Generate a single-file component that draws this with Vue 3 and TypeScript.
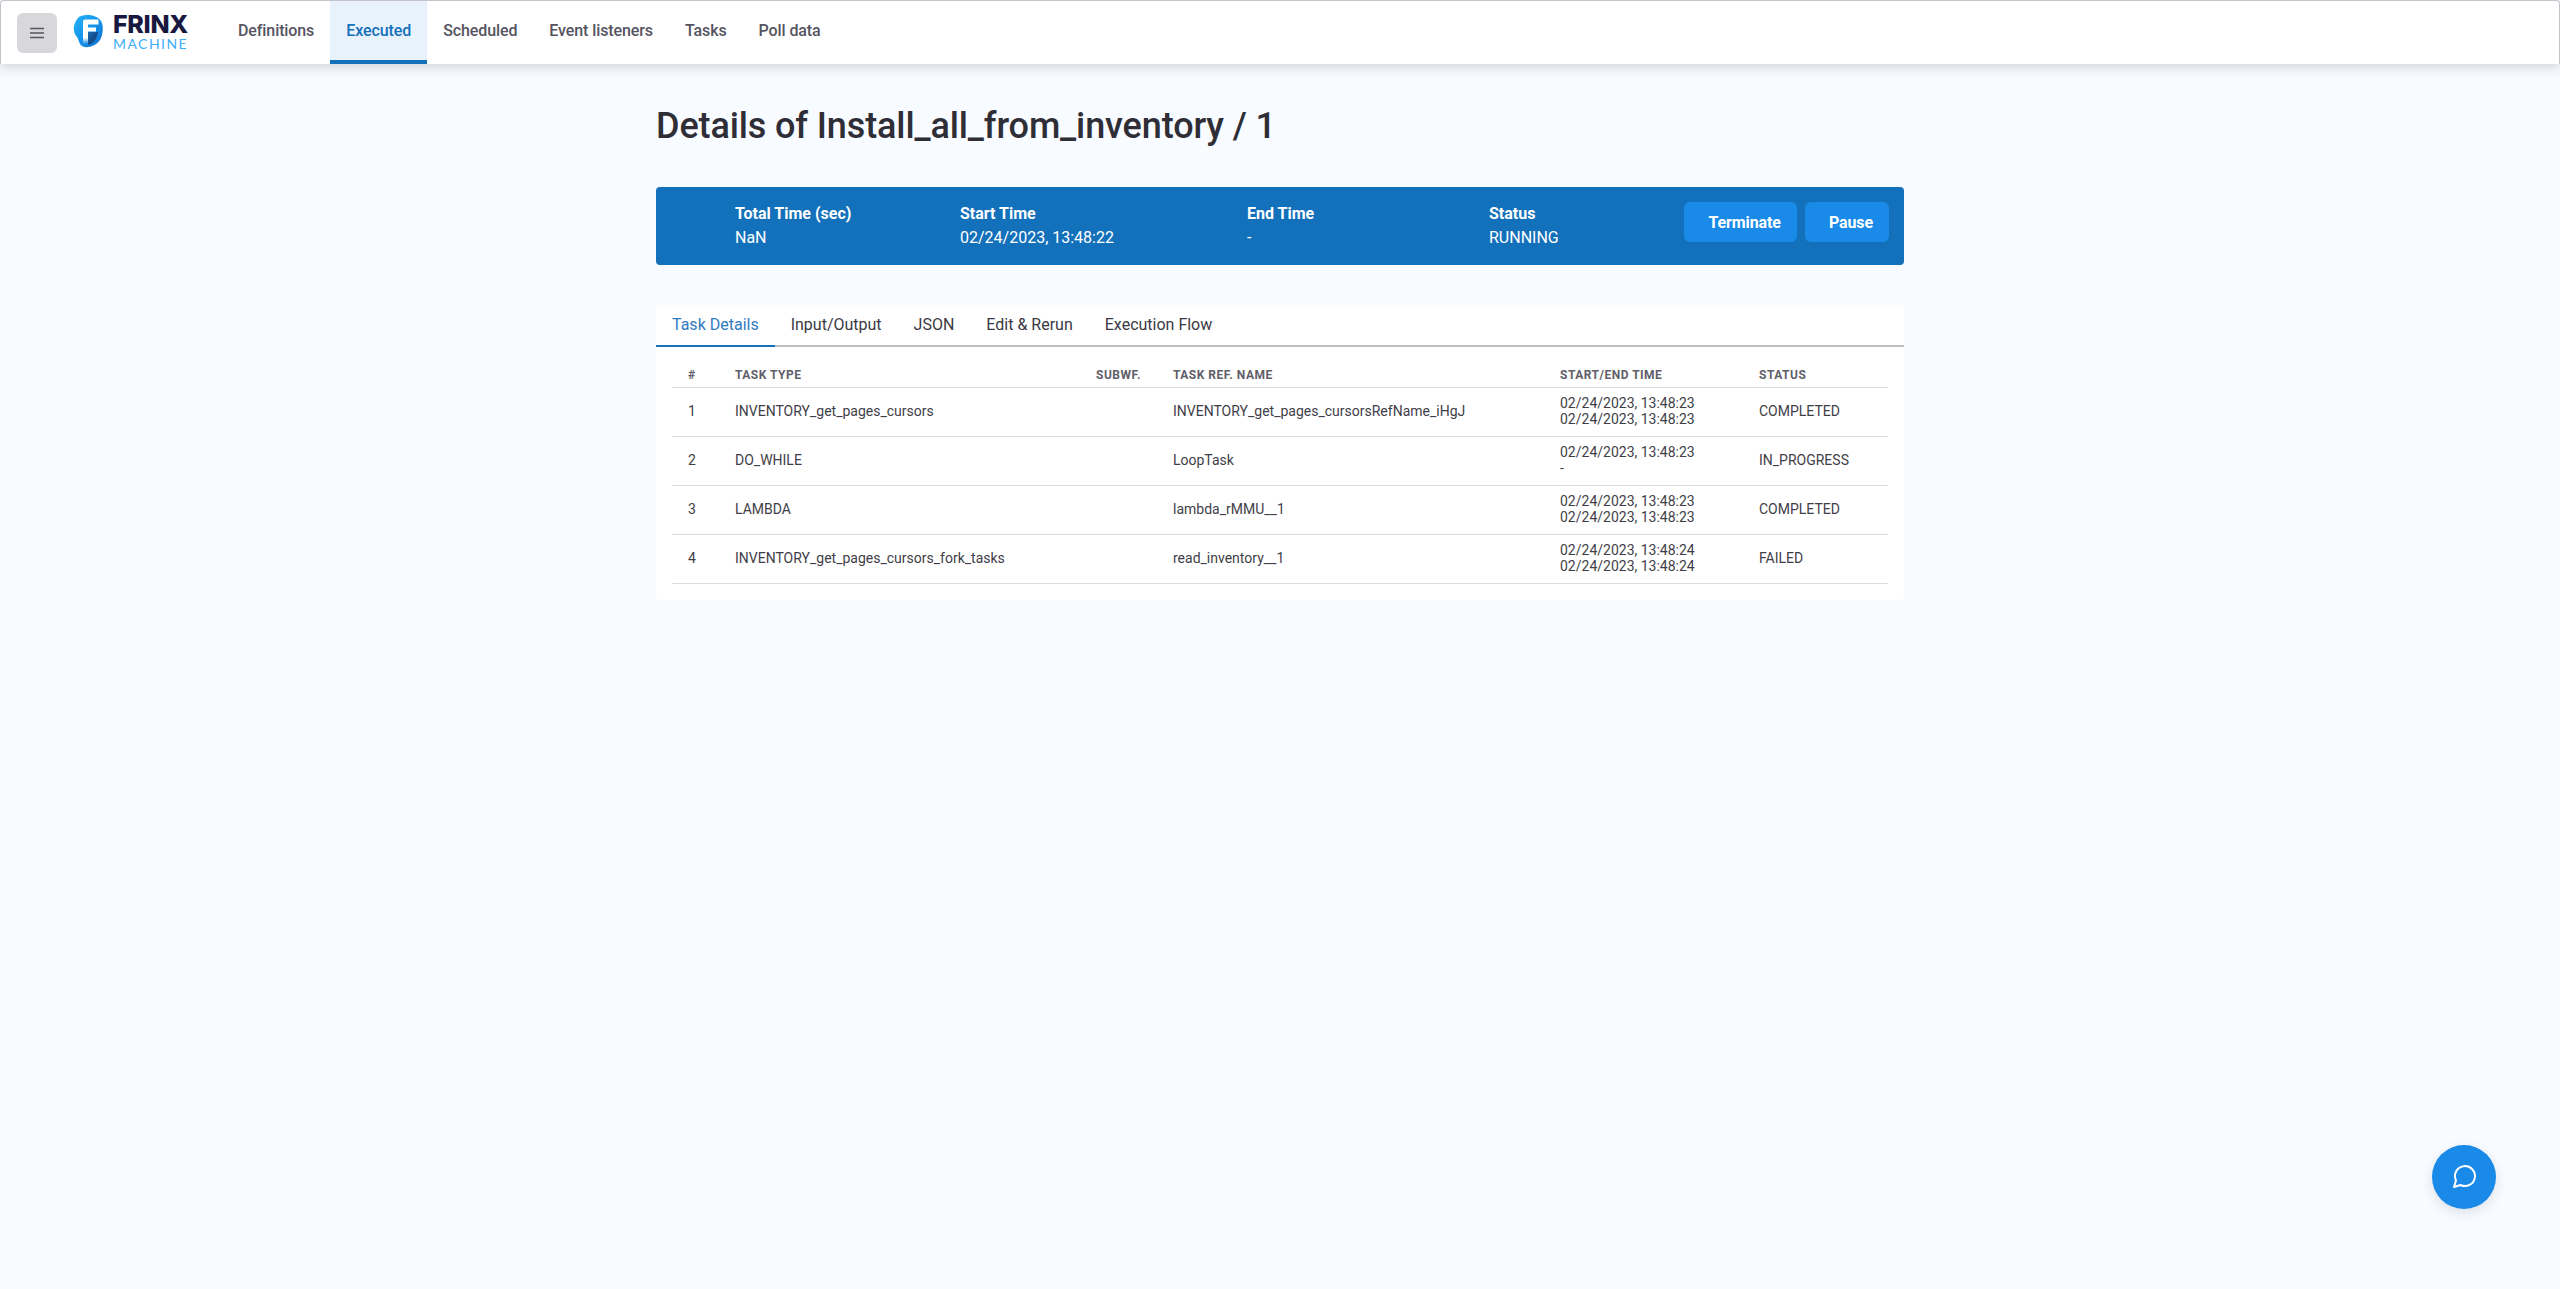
<script setup lang="ts">
interface Row {
  n: number
  type: string
  ref: string
  start: string
  end: string
  status: string
}

const navItems: string[] = ['Definitions', 'Executed', 'Scheduled', 'Event listeners', 'Tasks', 'Poll data']
const tabs: string[] = ['Task Details', 'Input/Output', 'JSON', 'Edit & Rerun', 'Execution Flow']
const summary = [
  { label: 'Total Time (sec)', value: 'NaN' },
  { label: 'Start Time', value: '02/24/2023, 13:48:22' },
  { label: 'End Time', value: '-' },
  { label: 'Status', value: 'RUNNING' },
]
const rows: Row[] = [
  { n: 1, type: 'INVENTORY_get_pages_cursors', ref: 'INVENTORY_get_pages_cursorsRefName_iHgJ', start: '02/24/2023, 13:48:23', end: '02/24/2023, 13:48:23', status: 'COMPLETED' },
  { n: 2, type: 'DO_WHILE', ref: 'LoopTask', start: '02/24/2023, 13:48:23', end: '-', status: 'IN_PROGRESS' },
  { n: 3, type: 'LAMBDA', ref: 'lambda_rMMU__1', start: '02/24/2023, 13:48:23', end: '02/24/2023, 13:48:23', status: 'COMPLETED' },
  { n: 4, type: 'INVENTORY_get_pages_cursors_fork_tasks', ref: 'read_inventory__1', start: '02/24/2023, 13:48:24', end: '02/24/2023, 13:48:24', status: 'FAILED' },
]
</script>

<template>
  <div class="page">
    <header class="navbar">
      <button class="menu-btn" type="button" aria-label="Menu">
        <svg width="16" height="16" viewBox="0 0 16 16" fill="none" stroke="#55555f" stroke-width="1.5">
          <path d="M1 3.5h14M1 8h14M1 12.5h14" />
        </svg>
      </button>
      <div class="logo">
        <svg class="logo-mark" width="30" height="33" viewBox="0 0 30 33">
          <defs>
            <linearGradient id="blobFill" x1="0" y1="0" x2="1" y2="1">
              <stop offset="0" stop-color="#25b4f8" />
              <stop offset="0.55" stop-color="#1590ea" />
              <stop offset="1" stop-color="#0d6fcb" />
            </linearGradient>
            <linearGradient id="shade" x1="0" y1="0" x2="1" y2="1">
              <stop offset="0" stop-color="#1a6fc0" />
              <stop offset="1" stop-color="#12305f" />
            </linearGradient>
            <linearGradient id="stem" x1="0" y1="0" x2="0" y2="1">
              <stop offset="0.45" stop-color="#fff" />
              <stop offset="1" stop-color="#fff" stop-opacity="0" />
            </linearGradient>
          </defs>
          <path d="M8 1C14 -1 24 0 28 6C31 11 30 20 27 25C23 31 14 34 9 31C6 29 6 25 4 22C1 19 0 14 1.5 9C3 5 5 2 8 1Z" fill="url(#blobFill)" />
          <path d="M15 15L15 30C20 29 24 24 25 17L15 17Z" fill="url(#shade)" />
          <path d="M10 6.5C10 5.4 10.9 4.5 12 4.5H25.5V9.5H15V12.5H23V16.5H15V18H10Z" fill="#fff" />
          <rect x="10" y="17.5" width="5" height="11.5" fill="url(#stem)" />
        </svg>
        <div class="logo-text">
          <span class="logo-frinx">FRINX</span>
          <span class="logo-machine">MACHINE</span>
        </div>
      </div>
      <nav class="nav-list">
        <a v-for="item in navItems" :key="item" class="nav-item" :class="{ active: item === 'Executed' }">{{ item }}</a>
      </nav>
    </header>

    <main class="content">
      <h1 class="title">Details of Install_all_from_inventory / 1</h1>

      <section class="summary">
        <div v-for="cell in summary" :key="cell.label" class="summary-cell">
          <div class="summary-label">{{ cell.label }}</div>
          <div class="summary-value">{{ cell.value }}</div>
        </div>
        <div class="summary-actions">
          <button class="action term" type="button">Terminate</button>
          <button class="action" type="button">Pause</button>
        </div>
      </section>

      <section class="panel">
        <div class="tabs">
          <a v-for="(tab, i) in tabs" :key="tab" class="tab" :class="{ active: i === 0 }">{{ tab }}</a>
        </div>
        <div class="table-wrap">
          <table class="table">
            <colgroup>
              <col class="c1" />
              <col class="c2" />
              <col class="c3" />
              <col class="c4" />
              <col class="c5" />
              <col class="c6" />
            </colgroup>
            <thead>
              <tr>
                <th>#</th>
                <th>Task Type</th>
                <th>Subwf.</th>
                <th>Task Ref. Name</th>
                <th>Start/End Time</th>
                <th>Status</th>
              </tr>
            </thead>
            <tbody>
              <tr v-for="row in rows" :key="row.n">
                <td>{{ row.n }}</td>
                <td>{{ row.type }}</td>
                <td></td>
                <td>{{ row.ref }}</td>
                <td>{{ row.start }}<br />{{ row.end }}</td>
                <td>{{ row.status }}</td>
              </tr>
            </tbody>
          </table>
        </div>
      </section>
    </main>

    <button class="fab" type="button" aria-label="Chat">
      <svg width="24" height="24" viewBox="0 0 24 24" fill="none" stroke="#fff" stroke-width="2" stroke-linecap="round" stroke-linejoin="round">
        <path d="M4 15.5L2 22L8.5 20A10 10 0 1 0 4 15.5Z" />
      </svg>
    </button>
  </div>
</template>

<style>
html,
body {
  margin: 0;
  background: #f8fbff;
}
</style>

<style scoped>
.page {
  position: relative;
  min-height: 1289px;
  background: #f8fbff;
  font-family: Roboto, "Liberation Sans", sans-serif;
  color: #2c2b33;
  overflow: hidden;
}

.navbar {
  display: flex;
  align-items: center;
  height: 64px;
  box-sizing: border-box;
  padding-left: 16px;
  background: #fff;
  border: 1px solid #c4c3cc;
  border-bottom: 0;
  border-radius: 4px 4px 0 0;
  box-shadow: 0 4px 12px rgba(30, 30, 60, 0.16);
}

.menu-btn {
  display: flex;
  align-items: center;
  justify-content: center;
  width: 40px;
  height: 40px;
  padding: 0;
  border: 0;
  border-radius: 6px;
  background: #d8d7dc;
}

.logo {
  display: flex;
  align-items: flex-start;
  margin-left: 16px;
  height: 34px;
  width: 147px;
}

.logo-mark {
  flex: none;
  margin-top: -1px;
}

.logo-text {
  display: flex;
  flex-direction: column;
  margin-left: 10px;
  margin-top: -2px;
}

.logo-frinx {
  font-family: Inter, sans-serif;
  font-weight: 800;
  font-size: 25px;
  line-height: 20px;
  letter-spacing: -0.3px;
  color: #191840;
  height: 24px;
}

.logo-machine {
  font-family: Lato, sans-serif;
  font-weight: 400;
  font-size: 14px;
  line-height: 11px;
  letter-spacing: 1.45px;
  color: #3eaef5;
}

.nav-list {
  display: flex;
  align-self: stretch;
  margin-left: 2px;
}

.nav-item {
  display: flex;
  align-items: center;
  padding: 0 16px;
  box-sizing: border-box;
  font-size: 16px;
  font-weight: 500;
  letter-spacing: -0.1px;
  color: #55545f;
  border-bottom: 4px solid transparent;
}

.nav-item.active {
  background: #e8f2fd;
  color: #1370ba;
  border-bottom-color: #1370ba;
}

.content {
  width: 1248px;
  margin: 0 auto;
  padding-top: 42px;
}

.title {
  margin: 0 0 41px;
  font-size: 36px;
  line-height: 40px;
  font-weight: 500;
  letter-spacing: -0.12px;
  color: #2f2e36;
}

.summary {
  display: grid;
  grid-template-columns: 225px 287px 242px 1fr auto;
  align-items: center;
  height: 78px;
  box-sizing: border-box;
  padding: 0 15px 0 79px;
  background: #1370ba;
  border-radius: 4px;
  color: #fff;
  font-size: 16px;
}

.summary-label {
  font-weight: 700;
  line-height: 24px;
}

.summary-value {
  line-height: 24px;
}

.summary-actions {
  display: flex;
  gap: 8px;
  align-self: start;
  margin-top: 15px;
}

.action {
  height: 40px;
  padding: 0 16px 0 24px;
  border: 0;
  border-radius: 6px;
  background: #1a8ae8;
  color: #fff;
  font-family: inherit;
  font-size: 16px;
  font-weight: 700;
  letter-spacing: -0.1px;
}

.panel {
  margin-top: 40px;
  height: 295px;
  background: #fff;
  border-radius: 4px;
}

.tabs {
  display: flex;
  height: 42px;
  box-sizing: border-box;
  border-bottom: 2px solid #c0c0c4;
}

.tab {
  display: flex;
  align-items: center;
  height: 42px;
  box-sizing: border-box;
  padding: 0 16px 2px;
  font-size: 16px;
  color: #3a3942;
  border-bottom: 2px solid transparent;
}

.tab.active {
  color: #2f7bc0;
  border-bottom-color: #1370ba;
}

.table-wrap {
  padding: 16px;
}

.table {
  width: 100%;
  table-layout: fixed;
  border-collapse: collapse;
}

.c1 { width: 47px; }
.c2 { width: 361px; }
.c3 { width: 77px; }
.c4 { width: 387px; }
.c5 { width: 199px; }
.c6 { width: 145px; }

th {
  padding: 4px 16px;
  font-size: 12px;
  line-height: 16px;
  font-weight: 700;
  letter-spacing: 0.5px;
  text-transform: uppercase;
  text-align: left;
  white-space: nowrap;
  color: #5f5e69;
  border-bottom: 1px solid #dcdce0;
}

td {
  padding: 7px 16px 9px;
  font-size: 14px;
  line-height: 16px;
  color: #3f3e48;
  white-space: nowrap;
  border-bottom: 1px solid #dcdce0;
  height: 32px;
}

.fab {
  position: absolute;
  right: 64px;
  top: 1145px;
  display: flex;
  align-items: center;
  justify-content: center;
  width: 64px;
  height: 64px;
  padding: 0;
  border: 0;
  border-radius: 50%;
  background: #1a8ae8;
  box-shadow: 0 4px 12px rgba(30, 30, 60, 0.12);
}
</style>
